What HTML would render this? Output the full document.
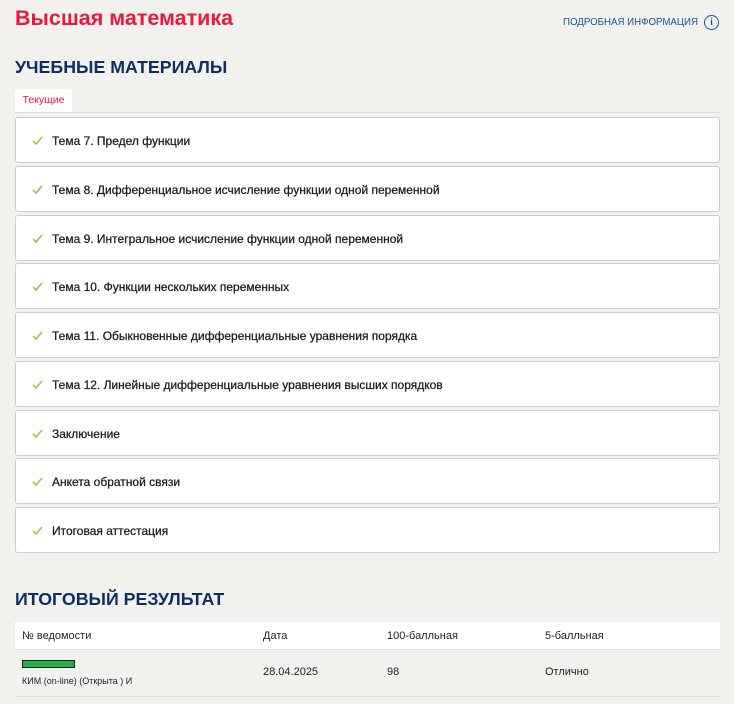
<!DOCTYPE html>
<html><head><meta charset="utf-8"><style>
body{margin:0;background:#f2f1ee;font-family:"Liberation Sans",sans-serif;width:734px;height:704px;overflow:hidden;position:relative}
.a{position:absolute}
h1{position:absolute;left:15px;top:6px;margin:0;font-size:21.5px;color:#e8193c;font-weight:bold}
.info{position:absolute;left:563px;top:17px;font-size:9.7px;color:#1a5690}
.ic{position:absolute;left:704px;top:15px;width:13px;height:13px;border:1.5px solid #1a5690;border-radius:50%;color:#1a5690;font-size:10px;font-weight:bold;text-align:center;line-height:13px}
h2{position:absolute;left:15px;margin:0;font-size:17.8px;color:#0d2e5e;font-weight:bold}
.tab{position:absolute;left:15px;top:89px;width:57px;height:23px;background:#fff;border-radius:3px 3px 0 0;color:#e8193c;font-size:10.5px;text-align:center;line-height:23px}
.line{position:absolute;left:15px;top:112px;width:705px;height:1px;background:#dcdcdc}
.it{position:absolute;left:15px;width:703px;height:44px;background:#fff;border:1px solid #ccc;border-radius:3px;font-size:12px;color:#1a1a1a;line-height:46px;-webkit-text-stroke:0.25px #1a1a1a}
.it span{position:absolute;left:36px}
.it svg{position:absolute;left:16px;top:18px}
.tb{position:absolute;left:15px;width:705px;background:#fff;font-size:11px;color:#222}
</style></head><body>
<h1>Высшая математика</h1>
<div class="info">ПОДРОБНАЯ ИНФОРМАЦИЯ</div>
<div class="ic">i</div>
<h2 style="top:57px">УЧЕБНЫЕ МАТЕРИАЛЫ</h2>
<div class="tab">Текущие</div>
<div class="line"></div>
<div class="it" style="top:117px"><svg width="11" height="9"><path d="M1 5 L4 8 L10 1" stroke="#8cc63f" stroke-width="1.5" fill="none"/></svg><span>Тема 7. Предел функции</span></div>
<div class="it" style="top:166px"><svg width="11" height="9"><path d="M1 5 L4 8 L10 1" stroke="#8cc63f" stroke-width="1.5" fill="none"/></svg><span>Тема 8. Дифференциальное исчисление функции одной переменной</span></div>
<div class="it" style="top:215px"><svg width="11" height="9"><path d="M1 5 L4 8 L10 1" stroke="#8cc63f" stroke-width="1.5" fill="none"/></svg><span>Тема 9. Интегральное исчисление функции одной переменной</span></div>
<div class="it" style="top:263px"><svg width="11" height="9"><path d="M1 5 L4 8 L10 1" stroke="#8cc63f" stroke-width="1.5" fill="none"/></svg><span>Тема 10. Функции нескольких переменных</span></div>
<div class="it" style="top:312px"><svg width="11" height="9"><path d="M1 5 L4 8 L10 1" stroke="#8cc63f" stroke-width="1.5" fill="none"/></svg><span>Тема 11. Обыкновенные дифференциальные уравнения порядка</span></div>
<div class="it" style="top:361px"><svg width="11" height="9"><path d="M1 5 L4 8 L10 1" stroke="#8cc63f" stroke-width="1.5" fill="none"/></svg><span>Тема 12. Линейные дифференциальные уравнения высших порядков</span></div>
<div class="it" style="top:410px"><svg width="11" height="9"><path d="M1 5 L4 8 L10 1" stroke="#8cc63f" stroke-width="1.5" fill="none"/></svg><span>Заключение</span></div>
<div class="it" style="top:458px"><svg width="11" height="9"><path d="M1 5 L4 8 L10 1" stroke="#8cc63f" stroke-width="1.5" fill="none"/></svg><span>Анкета обратной связи</span></div>
<div class="it" style="top:507px"><svg width="11" height="9"><path d="M1 5 L4 8 L10 1" stroke="#8cc63f" stroke-width="1.5" fill="none"/></svg><span>Итоговая аттестация</span></div>
<h2 style="top:589px">ИТОГОВЫЙ РЕЗУЛЬТАТ</h2>
<div class="tb" style="top:622px;height:27px;border-bottom:1px solid #ddd">
<span class="a" style="left:7px;top:8px">№ ведомости</span>
<span class="a" style="left:248px;top:8px">Дата</span>
<span class="a" style="left:372px;top:8px">100-балльная</span>
<span class="a" style="left:530px;top:8px">5-балльная</span>
</div>
<div class="a" style="left:15px;top:650px;width:705px;height:46px;border-bottom:1px solid #ddd;font-size:11px;color:#222">
<div class="a" style="left:7px;top:10px;width:51px;height:6px;background:#22b04b;border:1px solid #222"></div>
<span class="a" style="left:7px;top:26px;font-size:9px">КИМ (on-line) (Открыта ) И</span>
<span class="a" style="left:248px;top:16px">28.04.2025</span>
<span class="a" style="left:372px;top:16px">98</span>
<span class="a" style="left:530px;top:16px">Отлично</span>
</div>
</body></html>
